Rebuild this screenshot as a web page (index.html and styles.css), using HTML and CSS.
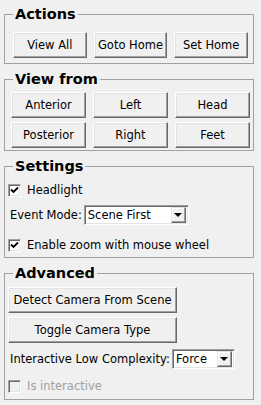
FILE: index.html
```html
<!DOCTYPE html>
<html lang="en">
<head>
  <meta charset="UTF-8" />
  <title>Camera Controls</title>
  <link rel="stylesheet" href="styles.css">
</head>
<body>
  <fieldset class="group actions">
    <legend>Actions</legend>
    <div class="btn-grid">
      <button>View All</button>
      <button>Goto Home</button>
      <button>Set Home</button>
    </div>
  </fieldset>

  <fieldset class="group view-from">
    <legend>View from</legend>
    <div class="btn-grid">
      <button>Anterior</button>
      <button>Left</button>
      <button>Head</button>
      <button>Posterior</button>
      <button>Right</button>
      <button>Feet</button>
    </div>
  </fieldset>

  <fieldset class="group settings">
    <legend>Settings</legend>
    <label class="check first">
      <span class="box"><svg width="9" height="9" viewBox="0 0 9 9"><path d="M1 3.5 L3.5 6 L8 1.5" fill="none" stroke="#000" stroke-width="1.9"/></svg></span>
      Headlight
    </label>
    <div class="field event-row">
      <span>Event Mode:</span>
      <div class="combo event-combo">
        <span class="combo-text">Scene First</span>
        <span class="combo-btn"><span class="arrow"></span></span>
      </div>
    </div>
    <label class="check zoom-row">
      <span class="box"><svg width="9" height="9" viewBox="0 0 9 9"><path d="M1 3.5 L3.5 6 L8 1.5" fill="none" stroke="#000" stroke-width="1.9"/></svg></span>
      Enable zoom with mouse wheel
    </label>
  </fieldset>

  <fieldset class="group advanced">
    <legend>Advanced</legend>
    <button class="wide">Detect Camera From Scene</button>
    <button class="wide">Toggle Camera Type</button>
    <div class="field complexity-row">
      <span>Interactive Low Complexity:</span>
      <div class="combo force-combo">
        <span class="combo-text">Force</span>
        <span class="combo-btn"><span class="arrow"></span></span>
      </div>
    </div>
    <label class="check disabled interactive-row">
      <span class="box"></span>
      Is interactive
    </label>
  </fieldset>
</body>
</html>
```

FILE: styles.css
```css
* {
  box-sizing: border-box;
}

body {
  margin: 0;
  padding: 6px 7px 0 4px;
  background-color: #f0f0f0;
  font-family: "DejaVu Sans", sans-serif;
  font-size: 11.5px;
  color: #000;
}

/* Group boxes */
.group {
  border: 1px solid #a0a0a0;
  margin: 0 0 7px;
  padding: 0 3px 2px;
  min-width: 0;
}

.group legend {
  font-size: 14.5px;
  font-weight: bold;
  line-height: 17px;
  padding: 0 2px;
  margin-left: 5px;
}

.btn-grid {
  display: grid;
  grid-template-columns: repeat(3, 1fr);
}

.actions {
  padding-bottom: 5px;
}

.actions .btn-grid {
  margin-top: 9px;
  padding: 0 2px 0 5px;
  column-gap: 7px;
}

.view-from .btn-grid {
  margin-top: 4px;
  padding: 0 0 0 3px;
  gap: 4px 7px;
}

/* Buttons */
button {
  height: 26px;
  padding: 0;
  font-family: inherit;
  font-size: 11.5px;
  color: #000;
  background-color: #f0f0f0;
  border: 1px solid;
  border-color: #fff #696969 #696969 #fff;
  box-shadow: inset -1px -1px #a0a0a0, inset 1px 1px #e3e3e3;
  border-radius: 0;
}

.advanced button.wide {
  display: block;
  width: 169px;
  margin-top: 5px;
}

.advanced button.wide + button.wide {
  margin-top: 4px;
}

/* Checkboxes */
.check {
  display: flex;
  align-items: center;
  gap: 6px;
  height: 16px;
}

.box {
  width: 13px;
  height: 13px;
  display: flex;
  align-items: center;
  justify-content: center;
  background-color: #fff;
  border: 1px solid;
  border-color: #a0a0a0 #fff #fff #a0a0a0;
  box-shadow: inset 1px 1px #696969, inset -1px -1px #e3e3e3;
}

.box svg {
  display: block;
}

.check.disabled {
  color: #a0a0a0;
}

.check.disabled .box {
  background-color: #f0f0f0;
}

.settings .first {
  margin-top: 7px;
}

.zoom-row {
  margin-top: 12px;
  margin-bottom: 2px;
}

/* Label + combo rows */
.field {
  display: flex;
  align-items: center;
  gap: 2px;
  padding-left: 2px;
}

.event-row {
  margin-top: 7px;
}

.complexity-row {
  margin-top: 6px;
}

.interactive-row {
  margin-top: 9px;
  margin-bottom: 3px;
}

.combo {
  display: flex;
  align-items: center;
  height: 20px;
  background-color: #fff;
  border: 1px solid;
  border-color: #a0a0a0 #fff #fff #a0a0a0;
  box-shadow: inset 1px 1px #696969, inset -1px -1px #e3e3e3;
  padding: 2px 2px 2px 3px;
}

.event-combo {
  width: 105px;
}

.force-combo {
  width: 63px;
}

.combo-text {
  flex: 1;
}

.combo-btn {
  width: 15px;
  height: 16px;
  display: flex;
  align-items: center;
  justify-content: center;
  background-color: #f0f0f0;
  border: 1px solid;
  border-color: #e3e3e3 #696969 #696969 #e3e3e3;
  box-shadow: inset -1px -1px #a0a0a0, inset 1px 1px #fff;
}

.arrow {
  width: 0;
  height: 0;
  border-left: 4px solid transparent;
  border-right: 4px solid transparent;
  border-top: 4px solid #000;
}
```
